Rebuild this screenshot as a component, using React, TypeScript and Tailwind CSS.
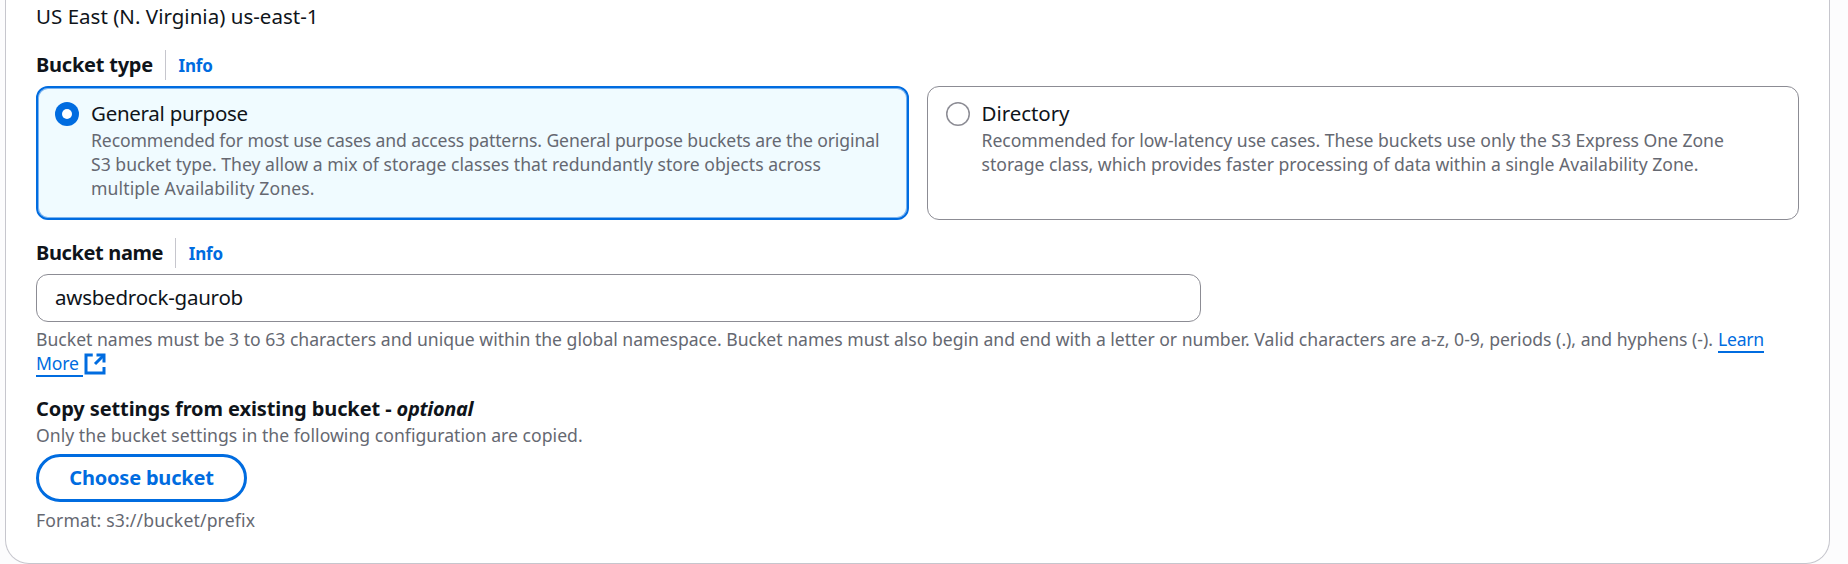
import type { ReactNode } from "react";

function FieldLabel({ children }: { children: ReactNode }) {
  return (
    <div className="flex h-[30px] items-start">
      <span className="mr-3 text-[20px] leading-[29px] font-bold">{children}</span>
      <span className="h-[30px] w-px bg-[#c6c6cd]" />
      <a href="#" className="ml-[12.5px] text-[17px] leading-[31px] font-bold tracking-[-0.15px] text-[#006ce0]">
        Info
      </a>
    </div>
  );
}

function ExternalIcon() {
  return (
    <svg viewBox="0 0 16 16" className="mt-[0.5px] h-6 w-6 shrink-0" fill="none" stroke="#006ce0" strokeWidth="2">
      <path d="M9 2h5v5" />
      <path d="m8 8 6-6" />
      <path d="M14 10v4H2V2h4.5" />
    </svg>
  );
}

export default function App() {
  return (
    <div className="h-[564px] overflow-hidden bg-[#fcfcfd] pr-[18px] pl-[5px] font-['Noto_Sans','Open_Sans',sans-serif] text-[#0f141a]">
      <main className="h-[564px] rounded-b-[24px] border border-t-0 border-[#c6c6cd] bg-white pr-[30px] pl-[30px] whitespace-nowrap">
        <p className="pt-px text-[20.5px] leading-[30px] tracking-[0.02px]">US East (N. Virginia) us-east-1</p>

        <section className="pt-[19px]">
          <FieldLabel>
            <span className="tracking-[-0.23px]">Bucket type</span>
          </FieldLabel>
          <div className="mt-1.5 grid h-[134px] grid-cols-2 gap-[18px]">
            <div className="flex rounded-[12px] border-2 border-[#006ce0] bg-[#f0fbff] pt-2.5 pl-[17px] shadow-[inset_0_0_0_1px_#7ab3f0]">
              <span className="mt-1 mr-3 flex h-6 w-6 shrink-0 items-center justify-center rounded-full bg-[#006ce0]">
                <span className="h-2.5 w-2.5 rounded-full bg-white" />
              </span>
              <div>
                <div className="text-[20.5px] leading-[30px] tracking-[-0.28px]">General purpose</div>
                <div className="text-[17.6px] leading-6 text-[#656871]">
                  <div className="tracking-[-0.12px]">
                    Recommended for most use cases and access patterns. General purpose buckets are the original
                  </div>
                  <div className="tracking-[0.012px]">
                    S3 bucket type. They allow a mix of storage classes that redundantly store objects across
                  </div>
                  <div className="tracking-[0.11px]">multiple Availability Zones.</div>
                </div>
              </div>
            </div>
            <div className="flex rounded-[12px] border border-[#8c8c94] pt-[11px] pl-[18px]">
              <span className="mt-1 mr-3 h-6 w-6 shrink-0 rounded-full bg-white shadow-[inset_0_0_0_1.5px_#8c8c94]" />
              <div>
                <div className="text-[20.5px] leading-[30px] tracking-[-0.05px]">Directory</div>
                <div className="text-[17.6px] leading-6 text-[#656871]">
                  <div className="tracking-[-0.03px]">
                    Recommended for low-latency use cases. These buckets use only the S3 Express One Zone
                  </div>
                  <div className="tracking-[-0.01px]">
                    storage class, which provides faster processing of data within a single Availability Zone.
                  </div>
                </div>
              </div>
            </div>
          </div>
        </section>

        <section className="pt-[18px]">
          <FieldLabel>
            <span className="tracking-[-0.37px]">Bucket name</span>
          </FieldLabel>
          <input
            defaultValue="awsbedrock-gaurob"
            className="mt-1.5 block h-12 w-[1165px] rounded-[12px] border border-[#8c8c94] bg-white pb-0.5 pl-[18px] text-[20.5px] tracking-[-0.23px] outline-none"
          />
          <div className="mt-[5px] text-[17.6px] leading-6 text-[#656871]">
            <div className="flex">
              <span className="mr-[5px] tracking-[-0.005px]">
                Bucket names must be 3 to 63 characters and unique within the global namespace. Bucket names must also begin
                and end with a letter or number. Valid characters are a-z, 0-9, periods (.), and hyphens (-).
              </span>
              <a href="#" className="h-[26px] border-b-2 border-[#006ce0] tracking-[-0.25px] text-[#006ce0]">
                Learn
              </a>
            </div>
            <a href="#" className="-mt-0.5 flex h-[26px] text-[#006ce0]">
              <span className="h-[26px] w-[46.5px] border-b-2 border-[#006ce0] tracking-[-0.2px]">More</span>
              <ExternalIcon />
            </a>
          </div>
        </section>

        <section className="pt-4">
          <h3 className="text-[20px] leading-[31px] font-bold tracking-[-0.1px]">
            Copy settings from existing bucket - <em className="tracking-[-0.35px]">optional</em>
          </h3>
          <p className="-mt-px text-[17.6px] leading-6 tracking-[0.03px] text-[#656871]">
            Only the bucket settings in the following configuration are copied.
          </p>
          <button className="mt-[7px] block h-12 w-[211px] rounded-full border-[3px] border-[#006ce0] bg-white pb-px text-[20px] font-bold tracking-[-0.2px] text-[#006ce0]">
            Choose bucket
          </button>
          <p className="mt-1.5 text-[17.6px] leading-6 tracking-[0.15px] text-[#656871]">Format: s3://bucket/prefix</p>
        </section>
      </main>
    </div>
  );
}
